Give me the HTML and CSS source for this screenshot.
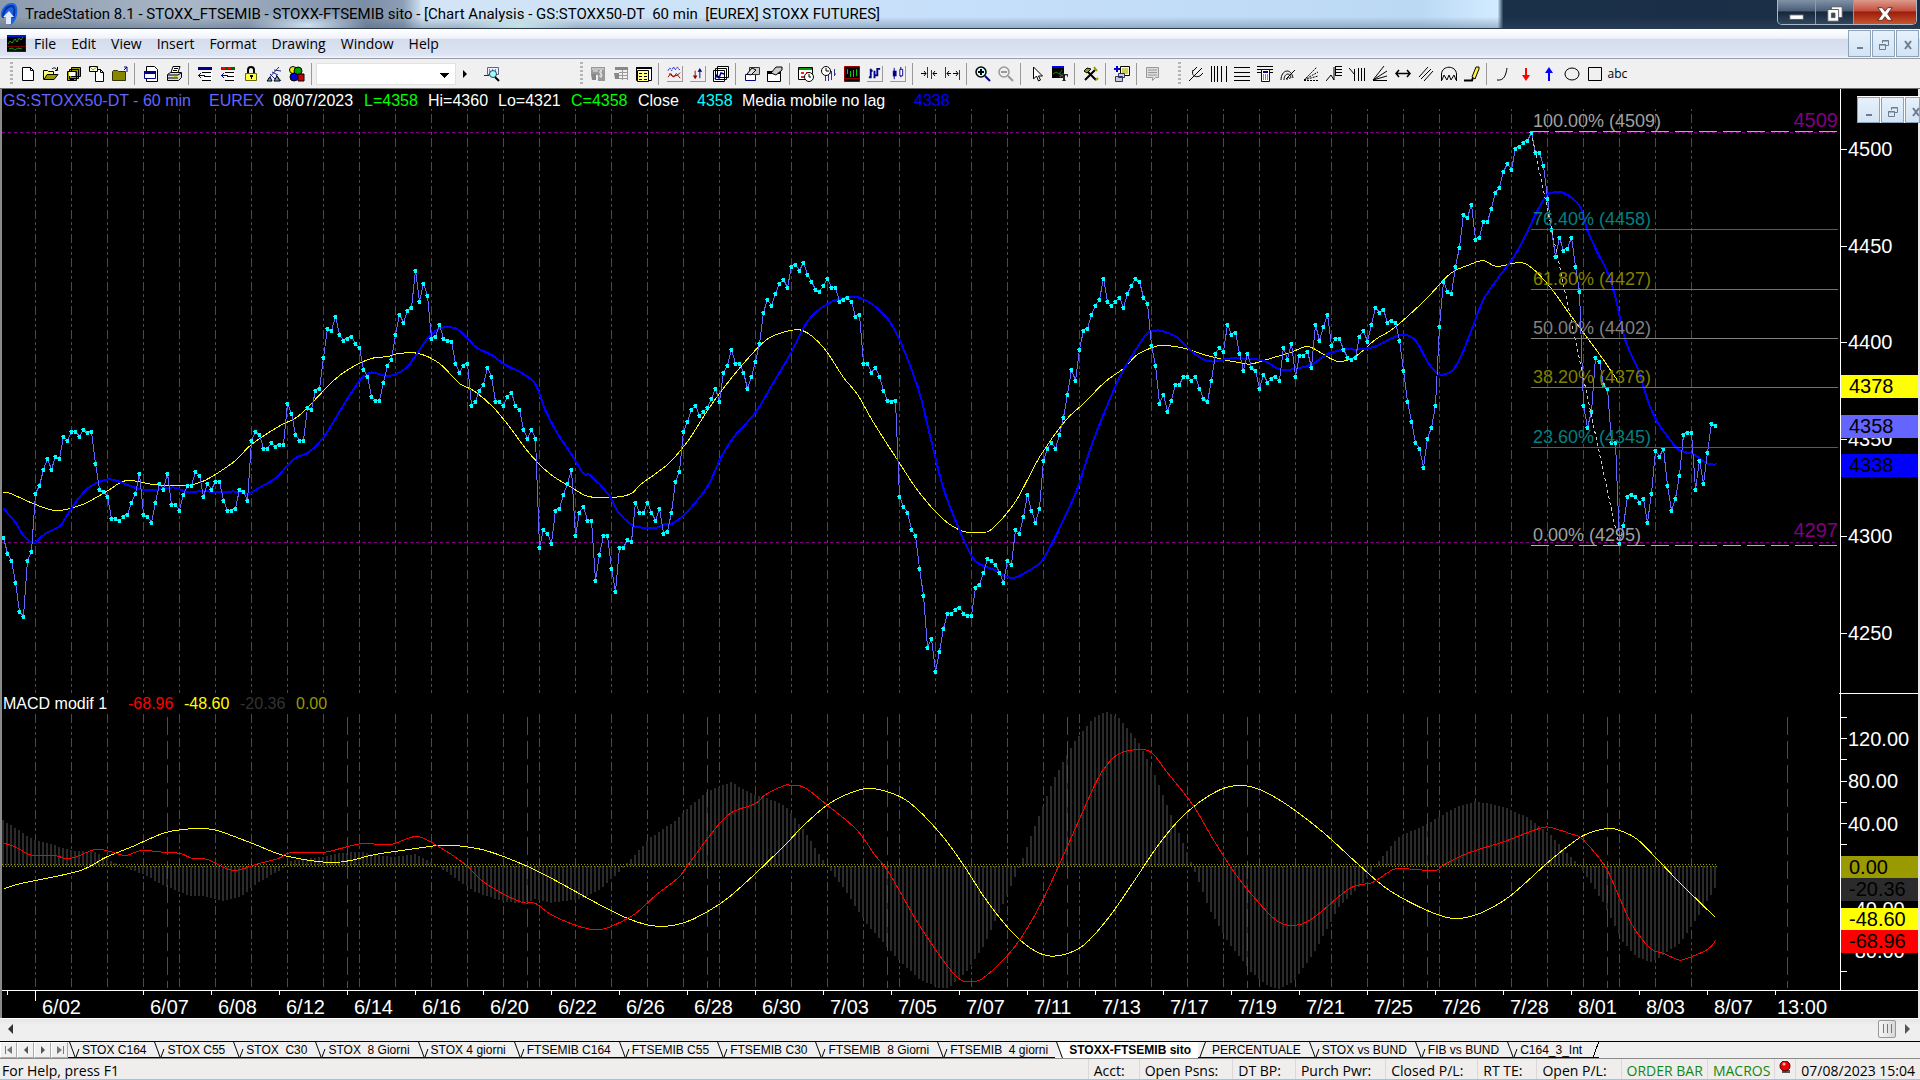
FILE: index.html
```html
<!DOCTYPE html>
<html lang="en">
<head>
    <meta charset="UTF-8">
    <title>TradeStation 8.1 - STOXX_FTSEMIB</title>
    <link rel="stylesheet" href="styles.css">
</head>
<body>
    <!-- Title bar -->
    <header class="title-bar">
        <svg class="app-logo" viewBox="0 0 18 24"><path d="M1 15C0 7 6 1 12 1c5 0 6 5 5 12-1 5-4 9-7 10l-1-8z" fill="#1c62e0"/><path d="M3 16C3 9 7 4 12 4c3 1 3 6 1 12" fill="none" stroke="#0a2f9c" stroke-width="2"/><path d="M6 22V15H3l6-6 5 6h-3v7z" fill="#dfe9f8"/></svg>
        <h1>TradeStation 8.1 - STOXX_FTSEMIB - STOXX-FTSEMIB sito - [Chart Analysis - GS:STOXX50-DT  60 min  [EUREX] STOXX FUTURES]</h1>
        <div class="window-buttons">
            <button aria-label="Minimize"><svg viewBox="0 0 20 20"><rect x="2" y="11" width="15" height="5" fill="#fff" stroke="#555"/></svg></button>
            <button aria-label="Restore"><svg viewBox="0 0 20 20"><path d="M6 2h12v12H6z" fill="#fff" stroke="#555"/><path d="M2 5h12v13H2z" fill="#fff" stroke="#555"/><path d="M6 9h4v5H6z" fill="#334a66" stroke="#555"/></svg></button>
            <button class="close" aria-label="Close"><svg viewBox="0 0 20 20"><path d="M2 3h5l3 4 3-4h5l-5 7 5 7h-5l-3-4-3 4H2l5-7z" fill="#fff" stroke="#5a2a2a"/></svg></button>
        </div>
    </header>

    <!-- Menu -->
    <nav class="menu-bar">
        <svg class="menu-logo" viewBox="0 0 19 17"><path fill="#000" d="M0 0h19v17H0z"/><path fill="#0018d8" d="M0 0h19v2H0z"/><path fill="#700" d="M0 11h19v1H0zM0 16h19v1H0zM18 2h1v14h-1z"/><path d="M1 9l2-3 2 2 3-4 2 3 2-4 2 2 2-3M2 14l3-1 3 2 3-2 4 1" fill="none" stroke="#0a0"/></svg>
        <a href="#">File</a>
        <a href="#">Edit</a>
        <a href="#">View</a>
        <a href="#">Insert</a>
        <a href="#">Format</a>
        <a href="#">Drawing</a>
        <a href="#">Window</a>
        <a href="#">Help</a>
        <div class="child-buttons">
            <button aria-label="Minimize chart"><svg viewBox="0 0 12 12"><path d="M3 8h6v2H3z" fill="#6d7d90"/></svg></button>
            <button aria-label="Restore chart"><svg viewBox="0 0 12 12"><path d="M4.500 4V1.500h6v5H8M4 2h7M1.500 5.500h6v5h-6zM1 6h7" fill="none" stroke="#6d7d90"/></svg></button>
            <button aria-label="Close chart"><svg viewBox="0 0 12 12"><path d="M3 2l6 8M9 2L3 10" fill="none" stroke="#6d7d90" stroke-width="2"/></svg></button>
        </div>
    </nav>

    <!-- Toolbars -->
    <div class="toolbars">
        <div class="toolbar toolbar-file">
            <span class="grip"></span>
            <button aria-label="New"><svg viewBox="0 0 16 16"><path d="M2.500 1.500h8l3 3v10h-11z" fill="#fff" stroke="#000"/><path d="M10.500 1.500v3h3" fill="none" stroke="#000"/></svg></button>
            <button aria-label="Open"><svg viewBox="0 0 16 16"><path d="M.500 13.500v-9h4l1 1h5v3" fill="#ff6" stroke="#000"/><path d="M1 13.500l3-5h11l-4 5z" fill="#990" stroke="#000"/><path d="M9 3c2-2 4-1 5 1M14.500 1v3.500H12" fill="none" stroke="#000"/></svg></button>
            <button aria-label="Save all"><svg viewBox="0 0 16 16"><path d="M5.500 1.500h9v9h-9zM3.500 3.500h9v9h-9zM1.500 5.500h9v9h-9z" fill="#990" stroke="#000"/><path d="M3 6h6v4H3z" fill="#fff"/><path d="M4 12h4v3H4z"/></svg></button>
            <button aria-label="New mail"><svg viewBox="0 0 16 16"><path d="M6.500 3.500h5l3 3v9h-8zM11.500 3.500v3h3" fill="#fff" stroke="#000"/><path d="M.500.500h8v5h-8z" fill="#ffd" stroke="#000"/><path d="M1 1l3 3 4-3" fill="none" stroke="#990"/></svg></button>
            <button aria-label="Close folder"><svg viewBox="0 0 16 16"><path d="M.500 14.500v-9l1-1h4l1 1h7v9z" fill="#880" stroke="#330"/><path d="M15 6V1h-3M15 1l-3 3" fill="none" stroke="#008"/></svg></button>
            <span class="sep"></span>
            <button aria-label="Print preview"><svg viewBox="0 0 16 16"><path d="M3.500.500h8l3 3v12h-11z" fill="#fff" stroke="#000"/><path d="M1.500 5.500h11v7h-11z" fill="#fff" stroke="#008"/><path d="M1 5h12v3H1z" fill="#008"/></svg></button>
            <button aria-label="Print"><svg viewBox="0 0 16 16"><path d="M5 6.500l2-6h7l-2 6" fill="#fff" stroke="#000"/><path d="M1.500 8.500l3-2h11v5l-3 3h-11z" fill="#ddd" stroke="#000"/><path d="M2 9h10M2 12h10M8 2.500h4M7 4.500h4M12 9l3-2" stroke="#000"/><path fill="#cc0" d="M8 10h3v1H8z"/></svg></button>
            <span class="sep"></span>
            <button aria-label="Import"><svg viewBox="0 0 16 16"><path d="M1 1h14v3H1z" fill="#008"/><path d="M6 5.500h9v9H6z" fill="#fff"/><path d="M5 6.500h9M7 10.500h7M5 14.500h9" stroke="#000"/><path d="M1 9.500h7M4 7L1.500 9.500 4 12" fill="none" stroke="#008"/></svg></button>
            <button aria-label="Import symbols"><svg viewBox="0 0 16 16"><path d="M1 1h14v3H1z" fill="#060"/><path d="M2 1h3v2H2zM8 1h3v2H8z" fill="#f00"/><path d="M6 5.500h9v9H6z" fill="#fff"/><path d="M5 6.500h9M7 10.500h7M5 14.500h9" stroke="#000"/><path d="M1 9.500h7M4 7L1.500 9.500 4 12" fill="none" stroke="#008"/></svg></button>
            <button aria-label="Lock"><svg viewBox="0 0 16 16"><path d="M5 7V4c0-4 6-4 6 0v3" fill="none" stroke="#000" stroke-width="2"/><path d="M2.500 7.500h11v7h-11z" fill="#ff4" stroke="#660"/><path d="M7 9h3v2H9v2H8v-2H7z"/></svg></button>
            <button aria-label="Satellite"><svg viewBox="0 0 16 16"><path d="M2 13L13 1M4 8l5 5M6 6l6 3M8 4l7 1M10 9l5 6" stroke="#228" fill="none"/><path d="M1 15h5l-2-4zM8 15h6l-3-5z" fill="#6ab" stroke="#000"/></svg></button>
            <button aria-label="Styles"><svg viewBox="0 0 16 16"><circle cx="4" cy="4" r="3.500" fill="#ee0" stroke="#000"/><circle cx="9" cy="5" r="4" fill="#090" stroke="#000"/><circle cx="5" cy="11" r="4" fill="#00c" stroke="#000"/><path d="M9 8h6v7H9z" fill="#c00" stroke="#000"/></svg></button>
            <span class="sep"></span>
            <select class="symbol-box" aria-label="Symbol"><option></option></select>
            <button class="narrow" aria-label="Go"><svg viewBox="0 0 8 16"><path d="M2 4l4 4-4 4z"/></svg></button>
            <button class="lookup" aria-label="Symbol lookup"><svg viewBox="0 0 16 16"><path d="M3.500 1.500h11v7h-11z" fill="#eef" stroke="#667"/><path d="M0 9.500h5M5 4h1M8 4h1M11 4h1M5 6h7" stroke="#226"/><circle cx="9" cy="8" r="3.500" fill="#9ff" stroke="#246"/><path d="M11 11l4 4" stroke="#000" stroke-width="2"/></svg></button>
        </div>
        <div class="toolbar toolbar-chart">
            <span class="grip"></span>
            <button aria-label="Quote" disabled><svg viewBox="0 0 16 16"><path d="M1 1h14v14H8V9H1z" fill="#999"/><path d="M2 3h12M3 5h5M12 5c-3-1-3 2-1 3s1 3-2 2M11 4v8" stroke="#eee" fill="none"/><path d="M1 8h5v6H2z" fill="#888"/></svg></button>
            <button aria-label="Quote list" disabled><svg viewBox="0 0 16 16"><path d="M2 1h13v3H2zM1 7h5v6H2z" fill="#888"/><path d="M6 6.500h9M6 9.500h9M6 12.500h9M9.500 4v10M14.500 4v10" stroke="#999"/></svg></button>
            <button aria-label="Data window"><svg viewBox="0 0 16 16"><path d="M.500 1.500h15v13H.500z" fill="#fff" stroke="#000"/><path d="M0 1h16v2H0z"/><path d="M1.500 4.500h11v11h-11z" fill="#ff8" stroke="#000"/><path d="M3 7.500h3M8 7.500h3M3 10.500h3M8 10.500h3M3 13.500h3M8 13.500h3" stroke="#000"/></svg></button>
            <span class="sep"></span>
            <button class="raised" aria-label="Indicators"><svg viewBox="0 0 16 16"><path d="M1 5l2-3 2 3 2-4 2 3 2-3 3 4" fill="none" stroke="#00c" stroke-dasharray="2 1"/><path d="M1 12l3-4 3 4 3-4 4 5M2 8l4 3 5-1 3-3" fill="none" stroke="#900"/></svg></button>
            <button class="raised" aria-label="Signals"><svg viewBox="0 0 16 16"><path d="M5.500 5v7" stroke="#900"/><path d="M3 10h5l-2.500 4z" fill="#900"/><path d="M10.500 5v8" stroke="#008"/><path d="M8 6h5l-2.500-4z" fill="#008"/></svg></button>
            <button aria-label="Strategies"><svg viewBox="0 0 16 16"><path d="M4.500.500h11v11h-11zM2.500 2.500h11v11h-11zM.500 4.500h11v11H.500z" fill="#fff" stroke="#000"/><path d="M2 13l2-4 2 3 2-5 3 1" fill="none" stroke="#008" stroke-width="1.500"/></svg></button>
            <span class="sep"></span>
            <button aria-label="Format analysis"><svg viewBox="0 0 16 16"><path d="M1.500 8.500h10v6h-10z" fill="#fff" stroke="#008"/><path d="M5.500 1.500h10v7h-10z" fill="#ccc" stroke="#333"/><path d="M3 8l5-6 4 2-5 5z" fill="#ddd" stroke="#000"/></svg></button>
            <button aria-label="Format window"><svg viewBox="0 0 16 16"><path d="M.500 5.500h13v10H.500z" fill="#fff" stroke="#000"/><path d="M0 5h14v3H0z"/><path d="M4 7l5-6h6v3l-6 5z" fill="#ccc" stroke="#000"/></svg></button>
            <span class="sep"></span>
            <button aria-label="Sessions"><svg viewBox="0 0 16 16"><path d="M.500 1.500h14v12H.500z" fill="#fff" stroke="#000"/><path d="M1 2h13v2H1z" fill="#090"/><path d="M3 6h3v2H3zM8 6h3v2H8zM3 10h3v2H3z" fill="#e22"/><circle cx="11" cy="11" r="4.500" fill="#fff" stroke="#000"/><path d="M11 8v3h2" fill="none" stroke="#000"/></svg></button>
            <button aria-label="Interval"><svg viewBox="0 0 16 16"><circle cx="5" cy="5" r="4.500" fill="#fff" stroke="#000"/><path d="M5 2v3h3" fill="none" stroke="#000"/><path d="M4.500 10v5M7.500 9v6M10.500 5v9M13.500 3v7M9 7h2M13 8h2" stroke="#338"/></svg></button>
            <button aria-label="Bar chart"><svg viewBox="0 0 16 16"><path d="M.500.500h15v15H.500z" fill="#000" stroke="#900"/><path d="M0 12.500h16" stroke="#900"/><path d="M3.500 3v5M6.500 5v6M9.500 4v7M12.500 3v7" stroke="#0c0"/></svg></button>
            <button class="raised" aria-label="OHLC bars"><svg viewBox="0 0 16 16"><path d="M4 3v10M2 12h2M4 5h2M8 5v8M11 2v9M9 10h2M11 3h3" stroke="#008" stroke-width="2"/></svg></button>
            <button class="raised" aria-label="Candles"><svg viewBox="0 0 16 16"><path d="M4.500 2v12M11.500 1v11" stroke="#008"/><path d="M3 5h4v6H3z" fill="#008"/><path d="M10.500 3.500h3v7h-3z" fill="#fff" stroke="#008"/></svg></button>
            <span class="sep"></span>
            <button aria-label="Decrease spacing"><svg viewBox="0 0 16 16"><path d="M6.500 1v11M10.500 4v9" stroke="#22c"/><path d="M0 7.500h5M17 7.500h-5M3 5l2 2.500L3 10M14 5l-2 2.500 2 2.500" stroke="#000" fill="none"/></svg></button>
            <button aria-label="Increase spacing"><svg viewBox="0 0 16 16"><path d="M1.500 1v11M15.500 4v10" stroke="#22c"/><path d="M3 7.500h4M9 7.500h5M5 5L3 7.500 5 10M12 5l2 2.500-2 2.500" stroke="#000" fill="none"/></svg></button>
            <span class="sep"></span>
            <button aria-label="Zoom in"><svg viewBox="0 0 16 16"><circle cx="6" cy="6" r="5" fill="#cff" stroke="#000" stroke-width="1.500"/><path d="M3 6h6M6 3v6" stroke="#000" stroke-width="2"/><path d="M10 10l5 5" stroke="#008" stroke-width="2"/></svg></button>
            <button aria-label="Zoom out" disabled><svg viewBox="0 0 16 16"><circle cx="6" cy="6" r="5" fill="#eee" stroke="#999" stroke-width="1.500"/><path d="M3 6h6" stroke="#999" stroke-width="2"/><path d="M10 10l5 5" stroke="#999" stroke-width="2"/></svg></button>
            <span class="sep"></span>
            <button aria-label="Pointer"><svg viewBox="0 0 16 16"><path d="M4.500 1v12l3-3 2 5 2-1-2-4h4z" fill="#fff" stroke="#000"/></svg></button>
            <button aria-label="Chart text"><svg viewBox="0 0 16 16"><path d="M0 0h12v12H0z"/><path d="M0 0h12v2H0z" fill="#00f"/><path d="M1 8l3-2 3 2 3-4" stroke="#090" fill="none"/><path d="M8 8h8v3h-1V9.500h-2V14h1v1h-4v-1h1V9.500H9V11H8z" stroke="#fff" stroke-width=".3"/></svg></button>
            <span class="sep"></span>
            <button aria-label="Tools"><svg viewBox="0 0 16 16"><path d="M2 14L12 4M3 4l10 10" stroke="#000" stroke-width="2"/><path d="M1 5l3-3 4 1-4 4z" fill="#990" stroke="#000"/><path d="M11 1l3 4M13 14l2-2" stroke="#990" stroke-width="2"/></svg></button>
            <span class="sep"></span>
            <button aria-label="Insert report"><svg viewBox="0 0 16 16"><path d="M6.500.500h9v9h-9z" fill="#ffc" stroke="#000"/><path d="M8 3h6M8 5h6M8 7h6" stroke="#990"/><path d="M0 3h6M3 0v6" stroke="#00c" stroke-width="2"/><path d="M4.500 7.500h6v4h-6zM1.500 10.500h7v5h-7z" fill="#ccd" stroke="#336"/></svg></button>
            <span class="sep"></span>
            <button aria-label="Notes" disabled><svg viewBox="0 0 16 16"><path d="M1.500 1.500h12v10h-3l-3 3v-3h-6z" fill="#ddd" stroke="#999"/><path d="M3 4h9M3 6.500h9M3 9h9" stroke="#999"/></svg></button>
        </div>
        <div class="toolbar">
            <span class="grip"></span>
            <button aria-label="Pitchfork"><svg viewBox="0 0 16 16"><path d="M1 15L8 8M5 4C3 9 7 12 12 10L15 7M5 5l4-4M8 8l6-6" stroke="#000" fill="none"/></svg></button>
            <button aria-label="Vertical lines"><svg viewBox="0 0 16 16"><path d="M.500 0v16M3.500 0v16M6.500 0v16M10.500 0v16M15.500 0v16" stroke="#000"/></svg></button>
            <button aria-label="Horizontal lines"><svg viewBox="0 0 16 16"><path d="M0 1.500h16M0 6.500h16M0 10.500h16M0 14.500h16" stroke="#000"/></svg></button>
            <button aria-label="Fibonacci calculator"><svg viewBox="0 0 16 16"><path d="M0 .500h16M0 3.500h16M0 6.500h16" stroke="#000"/><path d="M4.500 3.500h8v12h-8z" fill="#fff" stroke="#008"/><path d="M6 5h5v2H6z" fill="#008"/><path d="M6 9h6M6 11h6M6 13h6" stroke="#008" stroke-dasharray="1 1"/></svg></button>
            <button aria-label="Arcs"><svg viewBox="0 0 16 16"><path d="M1 14C1 4 11 1 13 12M4 14c0-7 6-8 7-2M7 14c0-3 2-4 3-1M6 13l9-9" stroke="#000" fill="none"/></svg></button>
            <button aria-label="Speed fan"><svg viewBox="0 0 16 16"><path d="M1 14.500h14M1 14L14 1M1 14l14-8M1 14l14-4" stroke="#000" stroke-dasharray="2 1" fill="none"/></svg></button>
            <button aria-label="Price extension"><svg viewBox="0 0 16 16"><path d="M0 15l5-6 3 5V1M10 .500h6M10 3.500h6M10 6.500h6M10 9.500h6M9.500 0v10" stroke="#000" fill="none"/></svg></button>
            <button aria-label="Time extension"><svg viewBox="0 0 16 16"><path d="M0 2l6 7M5.500 3v12M9.500 2v13M12.500 2v13M15.500 2v13" stroke="#000"/></svg></button>
            <button aria-label="Gann fan"><svg viewBox="0 0 16 16"><path d="M1 14.500h14M1 14L12 0M1 14L15 5M1 14l14-4" stroke="#000" fill="none"/></svg></button>
            <button aria-label="Horizontal arrow"><svg viewBox="0 0 16 16"><path d="M2 7.500h12M4 4L1 7.500 4 11M12 4l3 3.500-3 3.500" stroke="#000" fill="none" stroke-width="1.500"/></svg></button>
            <button aria-label="Channel"><svg viewBox="0 0 16 16"><path d="M1 11L10 1M3 13L13 3M6 15l9-10" stroke="#000"/></svg></button>
            <button aria-label="Cycles"><svg viewBox="0 0 16 16"><path d="M.500 15V8C1-1 15-1 15.500 8v7M1 14l2-5 3 5 2-5 2 5 3-5 2 5" stroke="#000" fill="none"/></svg></button>
            <button aria-label="Pencil"><svg viewBox="0 0 16 16"><path d="M0 14.500h8l1-3" stroke="#000" stroke-width="2" fill="none"/><path d="M8 11l4-10h3v2l-4 10z" fill="#fe4" stroke="#000"/></svg></button>
            <span class="sep"></span>
            <button aria-label="Curve"><svg viewBox="0 0 16 16"><path d="M2 14c7 1 9-5 10-12" stroke="#000" fill="none"/></svg></button>
            <button aria-label="Down arrow"><svg viewBox="0 0 16 16"><path d="M7 2h2v7h3l-4 6-4-6h3z" fill="#f00"/></svg></button>
            <button aria-label="Up arrow"><svg viewBox="0 0 16 16"><path d="M7 15h2V7h3L8 1 4 7h3z" fill="#00f"/></svg></button>
            <button aria-label="Ellipse"><svg viewBox="0 0 16 16"><ellipse cx="8" cy="8" rx="7" ry="6" stroke="#000" fill="none"/></svg></button>
            <button aria-label="Rectangle"><svg viewBox="0 0 16 16"><path d="M1.500 1.500h13v13h-13z" stroke="#000" fill="none"/></svg></button>
            <button class="text-tool">abc</button>
        </div>
    </div>

    <!-- Chart -->
    <main class="chart">
        <svg id="chart" viewBox="0 89 1920 929" role="img" aria-label="STOXX50 60 minute chart"></svg>
        <div class="child-buttons floating">
            <button aria-label="Minimize window"><svg viewBox="0 0 12 12"><path d="M3 8h6v2H3z" fill="#6d7d90"/></svg></button>
            <button aria-label="Restore window"><svg viewBox="0 0 12 12"><path d="M4.500 4V1.500h6v5H8M4 2h7M1.500 5.500h6v5h-6zM1 6h7" fill="none" stroke="#6d7d90"/></svg></button>
            <button aria-label="Close window"><svg viewBox="0 0 12 12"><path d="M3 2l6 8M9 2L3 10" fill="none" stroke="#6d7d90" stroke-width="2"/></svg></button>
        </div>
    </main>

    <div class="scroll-bar">
        <button aria-label="Scroll left"><svg viewBox="0 0 8 12"><path d="M6 1v10L1 6z" fill="#333"/></svg></button>
        <button class="thumb" aria-label="Scroll position"></button>
        <button aria-label="Scroll right"><svg viewBox="0 0 8 12"><path d="M2 1v10l5-5z" fill="#555"/></svg></button>
    </div>

    <!-- Workspace tabs -->
    <nav class="tabs">
        <button class="tab-nav" aria-label="First"><svg viewBox="0 0 10 10"><path d="M1 1h1v8H1zM8 1v8L3 5z" fill="#777"/></svg></button>
        <button class="tab-nav" aria-label="Previous"><svg viewBox="0 0 10 10"><path d="M7 1v8L3 5z" fill="#555"/></svg></button>
        <button class="tab-nav" aria-label="Next"><svg viewBox="0 0 10 10"><path d="M3 1v8l4-4z" fill="#555"/></svg></button>
        <button class="tab-nav" aria-label="Last"><svg viewBox="0 0 10 10"><path d="M8 1h1v8H8zM2 1v8l5-4z" fill="#777"/></svg></button>
        <a href="#" class="tab">STOX C164</a>
        <a href="#" class="tab">STOX C55</a>
        <a href="#" class="tab">STOX  C30</a>
        <a href="#" class="tab">STOX  8 Giorni</a>
        <a href="#" class="tab">STOX 4 giorni</a>
        <a href="#" class="tab">FTSEMIB C164</a>
        <a href="#" class="tab">FTSEMIB C55</a>
        <a href="#" class="tab">FTSEMIB C30</a>
        <a href="#" class="tab">FTSEMIB  8 Giorni</a>
        <a href="#" class="tab">FTSEMIB  4 giorni</a>
        <a href="#" class="tab active">STOXX-FTSEMIB sito</a>
        <a href="#" class="tab">PERCENTUALE</a>
        <a href="#" class="tab">STOX vs BUND</a>
        <a href="#" class="tab">FIB vs BUND</a>
        <a href="#" class="tab last">C164_3_Int</a>
    </nav>

    <footer class="status-bar">
        <span class="help">For Help, press F1</span>
        <span>Acct:</span>
        <span>Open Psns:</span>
        <span>DT BP:</span>
        <span>Purch Pwr:</span>
        <span>Closed P/L:</span>
        <span>RT TE:</span>
        <span>Open P/L:</span>
        <span class="on">ORDER BAR</span>
        <span class="on">MACROS</span>
        <span class="led"><svg viewBox="0 0 12 14"><path d="M3 9h8v3H3z" fill="#555"/><circle cx="6" cy="5" r="5" fill="#e00" stroke="#400"/><circle cx="5" cy="3" r="1.500" fill="#fbb"/></svg></span>
        <span class="clock">07/08/2023 15:04</span>
    </footer>

    <script src="chart.js"></script>
</body>
</html>
```

FILE: styles.css
```css
:root {
    --ui-font: "Open Sans", "Noto Sans", sans-serif;
    --chart-font: "Liberation Sans", Arial, sans-serif;
    --face: #f0f0f0;
}

* {
    margin: 0;
    padding: 0;
    box-sizing: border-box;
}

body {
    display: flex;
    flex-direction: column;
    min-height: 100vh;
    background-color: #9fc3d8;
    font-family: var(--ui-font);
    color: #000;
}

button {
    border: none;
    background: none;
    font: inherit;
}

a {
    color: inherit;
    text-decoration: none;
}

/* Title bar */
.title-bar {
    display: flex;
    height: 29px;
    border-bottom: 1px solid #2c3c4e;
    background:
        radial-gradient(ellipse 60px 14px at 16% 90%, #cfe0f0, transparent),
        radial-gradient(ellipse 60px 14px at 27% 90%, #c5e2e8, transparent),
        linear-gradient(rgba(255, 255, 255, 0) 60%, rgba(60, 80, 105, 0.35)),
        linear-gradient(90deg, #8c9bad 0, #a9b7c8 10%, #7c8ea6 19%, #8d9fb6 21%, #d3e5f5 22%, #c6dffa 50%, #bcd9f4 74%, #d2ebff 78%, #1a3049 78.3%, #1b2e45 100%);
}

.app-logo {
    width: 18px;
    height: 24px;
    margin: 2px 7px 0 0;
}

.title-bar h1 {
    flex: 1;
    font-family: Roboto, var(--ui-font);
    font-size: 15px;
    font-weight: normal;
    line-height: 29px;
    white-space: pre;
}

.window-buttons {
    display: flex;
    height: 25px;
    margin-right: 3px;
    border: 1px solid #aab8c8;
    border-top: none;
    border-radius: 0 0 5px 5px;
    overflow: hidden;
}

.window-buttons button {
    width: 38px;
    border-right: 1px solid #8b9bae;
    background: linear-gradient(#8092a6, #4a5f78 45%, #16273b 50%, #31475f);
}

.window-buttons .close {
    width: 62px;
    border-right: none;
    background: linear-gradient(#dc9a8c, #c5503c 45%, #9c1c0c 50%, #c8562c);
}

.window-buttons svg {
    width: 20px;
    height: 18px;
    vertical-align: middle;
}

/* Menu */
.menu-bar {
    display: flex;
    align-items: center;
    gap: 15px;
    height: 30px;
    padding-left: 7px;
    border-bottom: 1px solid #9a9da6;
    background: linear-gradient(#fff 0, #f0f3fa 32%, #d5dcec 34%, #dde4f4 90%, #f4f6fb);
    font-size: 14px;
}

.menu-logo {
    width: 19px;
    height: 17px;
    margin-right: -7px;
}

.child-buttons {
    display: flex;
    gap: 1px;
    height: 27px;
    margin: 0 1px 0 auto;
    background-color: #fff;
}

.child-buttons button {
    width: 23px;
    border: 1px solid #8fa3b8;
    background: linear-gradient(#e6f1fb, #d3e4f5);
}

.child-buttons svg {
    width: 12px;
    height: 12px;
    vertical-align: middle;
}

/* Toolbars */
.toolbars {
    display: flex;
    height: 30px;
    border-bottom: 1px solid #6e6e6e;
    background-color: var(--face);
}

.toolbar {
    display: flex;
    align-items: center;
    padding-left: 10px;
}

.toolbar-file {
    padding-right: 60px;
}

.toolbar-chart {
    padding-right: 4px;
}

.grip {
    width: 3px;
    height: 24px;
    margin-right: 3px;
    background: repeating-linear-gradient(#b4b4b4 0 2px, transparent 2px 4px);
}

.toolbar button {
    display: flex;
    align-items: center;
    justify-content: center;
    width: 23px;
    height: 22px;
}

.toolbar button svg {
    width: 16px;
    height: 16px;
}

.toolbar .raised svg {
    border-right: 1px solid #999;
    border-bottom: 1px solid #999;
}

.toolbar .narrow {
    width: 18px;
}

.toolbar .narrow svg {
    width: 8px;
}

.toolbar .lookup {
    width: 36px;
}

.toolbar .text-tool {
    font-size: 12px;
}

.sep {
    width: 1px;
    height: 22px;
    margin: 0 4px 0 3px;
    background-color: #999;
}

.symbol-box {
    width: 140px;
    height: 22px;
    border: 1px solid #e2e2e2;
    appearance: none;
    background: linear-gradient(#000, #000) no-repeat 123px 9px / 9px 1px,
        linear-gradient(#000, #000) no-repeat 124px 10px / 7px 1px,
        linear-gradient(#000, #000) no-repeat 125px 11px / 5px 1px,
        linear-gradient(#000, #000) no-repeat 126px 12px / 3px 1px,
        linear-gradient(#000, #000) no-repeat 127px 13px / 1px 1px,
        #fff;
}

/* Chart */
.chart {
    position: relative;
    background-color: #000;
}

#chart {
    display: block;
    width: 100%;
    height: auto;
    font-family: var(--chart-font);
}

.floating {
    position: absolute;
    top: 7px;
    right: 0;
    margin: 0;
    border-top: 1px solid #fff;
}

.floating button:last-child {
    width: 15px;
    overflow: hidden;
}

.floating button:last-child svg {
    margin-left: 4px;
}

.crisp {
    shape-rendering: crispEdges;
    fill: none;
}

.day-line {
    stroke: #4a4a4a;
    stroke-dasharray: 9 3 3 3 3 3;
}

.cycle-line {
    stroke: #006c6c;
    stroke-dasharray: 18 6;
}

.axis-line {
    stroke: #fff;
}

.level {
    stroke: #800080;
    stroke-dasharray: 3 3;
}

.fib-edge {
    stroke: #b0b0b0;
    stroke-dasharray: 18 6;
}

.fib-trend {
    stroke: #ccc;
    stroke-dasharray: 3 3;
}

.price {
    stroke: #6464ff;
}

.marker {
    fill: #00ffff;
}

.average {
    stroke: #0000ff;
    stroke-width: 2;
}

.cycle {
    stroke: #ffff00;
}

.macd {
    stroke: #ff0000;
}

.zero {
    stroke: #999900;
    stroke-dasharray: 1 2;
}

.histogram {
    stroke: #2b2b2b;
    stroke-width: 2;
}

.axis-text {
    font-size: 20px;
}

.fib-text {
    font-size: 18px;
}

.legend-text {
    font-size: 16px;
}

/* Scroll bar */
.scroll-bar {
    display: flex;
    align-items: center;
    height: 23px;
    padding: 0 2px 3px 0;
    border-top: 1px solid #fff;
    background: linear-gradient(#e6e6e6, #efefef 30%);
}

.scroll-bar button {
    display: flex;
    align-items: center;
    justify-content: center;
    width: 22px;
    height: 18px;
}

.scroll-bar svg {
    width: 8px;
    height: 12px;
}

.scroll-bar .thumb {
    width: 18px;
    margin-left: auto;
    border: 1px solid #979797;
    border-radius: 2px;
    background: repeating-linear-gradient(90deg, #777 0 1px, transparent 1px 4px) no-repeat center / 9px 9px,
        linear-gradient(90deg, #f5f5f5, #d8d8d8);
}

/* Tabs */
.tabs {
    display: flex;
    height: 18px;
    border-top: 1px solid #000;
    border-bottom: 1px solid #8c8c8c;
    background-color: var(--face);
    font-family: var(--chart-font);
    font-size: 12px;
    line-height: 16px;
}

.tab-nav {
    width: 17px;
    border: 1px solid #aaa;
    border-top-color: #fff;
    border-left-color: #fff;
}

.tab-nav svg {
    display: block;
    width: 10px;
    height: 10px;
    margin: auto;
}

.tab {
    position: relative;
    padding: 0 7px 0 14px;
    border-bottom: 1px solid #000;
    white-space: pre;
}

/* slanted edge shared by two neighbouring tabs */
.tab::before {
    content: "";
    position: absolute;
    top: 0;
    left: 4px;
    width: 1px;
    height: 16px;
    background-color: #000;
    transform: skewX(20deg);
}

.tab::after {
    content: "";
    position: absolute;
    left: 9px;
    bottom: 0;
    width: 1px;
    height: 8px;
    background-color: #000;
    transform: skewX(-20deg);
}

.tab.active {
    background: linear-gradient(70deg, var(--face) 7px, #fff 8px);
    font-weight: bold;
    border-bottom-color: #fff;
}

.tab.active::after {
    display: none;
}

.tab.active + .tab::before {
    transform: skewX(-20deg);
}

.tab.active + .tab::after {
    display: none;
}

.tab.last {
    padding-right: 17px;
    background: linear-gradient(110deg, transparent calc(100% - 6px), #000 calc(100% - 6px), #000 calc(100% - 5px), transparent calc(100% - 5px));
}

/* Status bar */
.status-bar {
    display: flex;
    height: 20px;
    background-color: #f0eded;
    font-size: 14px;
    line-height: 23px;
    overflow: hidden;
    white-space: nowrap;
}

.status-bar span {
    padding: 0 14px 0 5px;
    border-left: 1px solid #dcd8d8;
}

.status-bar .help {
    flex: 1;
    padding-left: 2px;
    border-left: none;
}

.status-bar .on {
    padding-right: 4px;
    color: #118811;
}

.status-bar .led {
    padding: 2px 4px 0;
}

.led svg {
    display: block;
    width: 12px;
    height: 14px;
}

.status-bar .clock {
    padding-right: 5px;
}
```

FILE: chart.js
```js
const svg = document.getElementById('chart');
const NS = 'http://www.w3.org/2000/svg';
const LAST = 1838;

// close of every 60 min bar, as the height at which it is plotted
const closes = [
    537,553,560,582,611,616,560,551,493,485,469,458,469,456,458,436,440,431,431,436,
    429,432,431,463,489,491,496,518,518,520,516,514,502,493,473,514,516,522,502,483,
    489,473,504,504,510,494,485,485,471,475,496,483,489,481,481,500,510,510,508,489,
    491,500,440,431,434,448,448,442,446,444,444,403,413,434,440,440,407,409,390,388,
    357,328,330,316,334,340,338,336,343,347,369,376,396,400,400,382,365,359,334,314,
    322,310,307,270,301,283,295,338,336,324,338,340,341,363,372,365,363,405,401,390,
    384,367,376,401,401,405,396,392,405,409,429,438,429,438,547,529,533,543,510,508,
    494,483,469,535,512,506,520,520,580,554,535,535,568,591,547,547,539,541,502,512,
    512,502,512,520,508,533,531,512,481,471,431,421,409,405,415,411,407,398,388,401,
    372,365,349,363,363,372,388,376,361,343,312,299,305,293,283,279,287,266,264,270,
    262,274,281,289,291,285,278,287,287,301,299,297,301,316,314,363,363,372,367,376,
    390,400,401,400,496,506,512,529,535,568,595,647,638,671,651,628,613,613,609,607,
    613,615,615,587,584,572,558,560,564,572,582,560,564,529,533,516,494,510,522,508,
    460,448,442,448,434,417,394,369,380,349,330,328,314,305,299,278,301,305,301,297,
    307,293,285,278,281,297,303,345,365,403,394,411,400,384,384,376,376,380,376,388,
    398,401,380,353,347,351,324,334,332,353,370,353,367,370,388,374,382,378,376,380,
    347,359,343,376,355,355,351,367,324,340,326,314,345,338,338,349,357,359,357,336,
    330,341,324,307,312,309,322,320,322,340,370,401,421,442,448,467,438,427,405,326,
    281,291,293,266,247,214,217,204,239,237,221,221,208,192,187,171,163,169,148,146,
    142,140,132,152,152,165,198,229,256,237,250,248,237,266,291,405,427,411,357,361,
    384,388,442,442,543,525,496,494,496,502,498,522,493,450,456,448,485,510,498,475,
    434,432,432,489,460,483,452,423,425
];

const average = [
    3,508, 15,522, 23,535, 31,542, 35,542, 45,533, 59,526, 67,514, 78,498, 90,486, 107,479, 118,481,
    137,488, 151,490, 173,487, 188,492, 203,490, 214,492, 233,491, 245,493, 249,493, 261,486, 276,477,
    286,466, 296,457, 308,452, 323,437, 341,408, 351,392, 361,378, 371,372, 384,375, 395,374, 408,365,
    427,338, 439,328, 455,328, 467,338, 476,347, 492,355, 504,364, 522,373, 535,384, 545,410, 557,433,
    571,454, 583,473, 590,475, 608,494, 618,512, 632,525, 640,527, 657,527, 663,524, 672,523, 685,513,
    707,486, 720,458, 733,437, 755,412, 773,382, 788,357, 807,321, 823,306, 840,298, 858,297, 877,308,
    895,331, 917,386, 930,437, 943,488, 960,532, 972,557, 980,564, 993,569, 1005,576, 1015,577, 1025,572,
    1040,562, 1052,542, 1065,515, 1077,488, 1090,448, 1103,414, 1120,375, 1140,342, 1148,332, 1157,330,
    1163,331, 1177,337, 1188,348, 1203,359, 1213,361, 1230,358, 1257,359, 1267,362, 1280,369, 1297,368,
    1313,363, 1328,353, 1345,349, 1358,349, 1375,346, 1387,340, 1402,334, 1415,340, 1428,363, 1437,373,
    1443,374, 1453,369, 1463,350, 1472,327, 1483,299, 1498,277, 1513,257, 1525,235, 1537,210, 1547,194,
    1553,192, 1562,192, 1572,198, 1580,207, 1587,230, 1597,252, 1607,272, 1615,297, 1625,340, 1638,370,
    1648,402, 1657,422, 1665,433, 1678,449, 1693,454, 1707,463, 1716,464
];

const cycle = [
    3,492, 10,493, 35,504, 56,510, 82,504, 106,491, 126,480, 153,484, 186,485, 202,481, 218,472, 235,460,
    251,444, 278,426, 296,417, 310,404, 333,380, 351,367, 371,358, 388,356, 398,353, 418,353, 439,363,
    459,383, 473,390, 492,406, 508,425, 529,453, 549,473, 571,487, 588,496, 612,497, 631,493, 640,484,
    667,464, 687,441, 707,410, 722,389, 743,363, 765,340, 782,332, 802,330, 823,347, 843,377, 857,394,
    873,422, 898,461, 918,491, 943,519, 963,531, 980,532, 992,528, 1015,501, 1040,455, 1065,420, 1082,404,
    1105,381, 1123,368, 1137,354, 1152,347, 1160,345, 1175,346, 1188,349, 1210,356, 1243,363, 1253,363,
    1273,357, 1290,352, 1305,346, 1313,348, 1330,358, 1340,361, 1355,356, 1375,339, 1390,330, 1407,316,
    1427,297, 1450,273, 1467,265, 1483,260, 1496,266, 1519,262, 1532,268, 1550,287, 1568,312, 1585,335,
    1602,358, 1619,383
];

const macd = [
    4,843, 14,846, 32,855, 54,855, 65,858, 74,857, 95,849, 110,851, 125,855, 141,850, 165,852, 180,853,
    192,858, 207,859, 228,869, 240,869, 255,864, 278,858, 290,852, 322,852, 340,848, 362,843, 390,844,
    416,836, 438,846, 465,864, 480,879, 500,892, 522,902, 535,903, 552,915, 582,927, 600,929, 615,924,
    635,913, 655,895, 678,877, 690,861, 715,828, 731,812, 755,803, 765,794, 784,785, 791,785, 804,787,
    826,804, 856,829, 874,854, 889,873, 919,925, 954,974, 972,981, 986,975, 1012,949, 1029,924, 1044,896,
    1062,857, 1094,785, 1106,765, 1119,753, 1140,749, 1152,753, 1166,771, 1192,804, 1214,841, 1236,875,
    1259,903, 1276,920, 1292,925, 1312,918, 1349,888, 1372,882, 1389,871, 1399,868, 1434,870, 1442,865,
    1469,852, 1504,841, 1542,827, 1557,829, 1572,834, 1580,837, 1595,853, 1607,870, 1618,895, 1632,925,
    1650,948, 1663,953, 1677,959, 1683,959, 1707,949, 1715,940
];

const signal = [
    4,888, 20,883, 35,880, 80,870, 105,857, 132,846, 162,833, 182,829, 205,828, 220,831, 252,843, 280,854,
    310,860, 332,862, 350,860, 375,854, 415,848, 438,845, 455,845, 485,850, 525,865, 555,880, 595,902,
    625,917, 650,925, 672,925, 692,919, 720,903, 742,885, 784,845, 802,826, 826,805, 846,794, 866,788,
    886,791, 909,802, 939,832, 962,863, 984,897, 1009,929, 1029,947, 1046,955, 1064,954, 1084,944,
    1109,916, 1134,880, 1159,843, 1184,814, 1214,792, 1236,785, 1259,789, 1289,806, 1324,833, 1359,865,
    1389,890, 1429,911, 1454,918, 1479,913, 1509,896, 1545,864, 1567,846, 1585,834, 1608,828, 1622,831,
    1637,839, 1658,860, 1680,883, 1715,917
];

// outline of the MACD histogram
const histogram = [
    3,820, 32,839, 46,843, 75,851, 95,852, 118,865, 145,875, 165,886, 190,896, 205,896, 225,901, 240,897,
    258,883, 282,869, 290,861, 322,857, 338,853, 362,852, 392,857, 415,854, 435,864, 452,876, 475,892,
    505,902, 525,903, 535,899, 550,903, 582,899, 602,888, 622,869, 650,838, 675,821, 690,806, 708,791,
    731,782, 752,794, 765,797, 784,805, 787,808, 804,830, 826,865, 844,888, 866,923, 896,957, 919,979,
    939,988, 949,988, 966,972, 984,945, 1004,902, 1022,861, 1034,828, 1054,779, 1074,742, 1094,717,
    1106,712, 1119,718, 1139,743, 1154,773, 1172,817, 1192,864, 1209,908, 1229,943, 1252,973, 1269,987,
    1279,989, 1294,981, 1314,953, 1339,907, 1364,882, 1379,861, 1397,838, 1429,823, 1454,808, 1476,801,
    1504,807, 1529,818, 1549,833, 1567,853, 1580,866, 1603,902, 1623,942, 1637,957, 1650,962, 1660,957,
    1680,943, 1692,926, 1703,908, 1715,888
];

const dates = [
    '6/07', '6/08', '6/12', '6/14', '6/16', '6/20', '6/22', '6/26', '6/28', '6/30', '7/03', '7/05', '7/07',
    '7/11', '7/13', '7/17', '7/19', '7/21', '7/25', '7/26', '7/28', '8/01', '8/03', '8/07', '13:00'
];

function add(tag, attrs, content) {
    const el = document.createElementNS(NS, tag);
    for (const key in attrs) {
        el.setAttribute(key, attrs[key]);
    }
    if (content) {
        el.textContent = content;
    }
    svg.appendChild(el);
    return el;
}

function path(cls, d, extra) {
    return add('path', Object.assign({ class: 'crisp ' + cls, d: d }, extra));
}

function label(cls, x, y, fill, content, anchor) {
    add('text', { class: cls, x: x, y: y, fill: fill, 'text-anchor': anchor || 'start' }, content);
}

// smooth curve through a flat list of x, y pairs
function curve(flat) {
    const p = [];
    for (let i = 0; i < flat.length; i += 2) {
        p.push([flat[i] + 0.5, flat[i + 1] + 0.5]);
    }
    let d = 'M' + p[0];
    for (let i = 0; i < p.length - 1; i++) {
        const a = p[Math.max(i - 1, 0)], b = p[i], c = p[i + 1], e = p[Math.min(i + 2, p.length - 1)];
        d += 'C' + [
            b[0] + (c[0] - a[0]) / 6, b[1] + (c[1] - a[1]) / 6,
            c[0] - (e[0] - b[0]) / 6, c[1] - (e[1] - b[1]) / 6,
            c[0], c[1]
        ];
    }
    return d;
}

function valueAt(flat, x) {
    for (let i = 2; i < flat.length; i += 2) {
        if (flat[i] >= x) {
            const t = (x - flat[i - 2]) / (flat[i] - flat[i - 2]);
            return flat[i - 1] + t * (flat[i + 1] - flat[i - 1]);
        }
    }
    return flat[flat.length - 1];
}

// Histogram and grid
let bars = '';
for (let i = 0; i < closes.length; i++) {
    const x = 3 + i * 4;
    bars += `M${x} 866V${Math.round(valueAt(histogram, x))}`;
}
for (let x = 35; x <= 1691; x += 36) {
    path('day-line', `M${x}.5 109V693`, { 'stroke-dashoffset': 19 });
    path('day-line', `M${x}.5 714V987`);
}
path('histogram', bars);
for (let x = 167; x <= 1787; x += 180) {
    path('cycle-line', `M${x}.5 717V988`);
}
path('zero', 'M2 864.5H1717');
path('zero', 'M3 866.5H1717');

// Price panel
path('level', `M2 132.500H${LAST}`);
path('level', `M2 542.500H${LAST}`);
path('cycle', curve(cycle));
path('average', curve(average));
path('price', 'M' + closes.map((y, i) => `${3.5 + i * 4} ${y + 0.5}`).join('L'));
add('path', {
    class: 'marker',
    'shape-rendering': 'crispEdges',
    d: closes.map((y, i) => `M${2 + i * 4} ${y - 1}h3v4h-3v-2h-1v-1h1z`).join('')
});

path('fib-edge', `M1531 131.500H${LAST}M1531 545.500H${LAST}`);
path('fib-trend', 'M1531 132L1619 545');
[
    [229, '76.40% (4458)', '#008080'],
    [289, '61.80% (4427)', '#808000'],
    [338, '50.00% (4402)', '#808080'],
    [387, '38.20% (4376)', '#808000'],
    [447, '23.60% (4345)', '#008080']
].forEach(([y, content, color]) => {
    path('', `M1531 ${y}.5H${LAST}`, { stroke: color });
    label('fib-text', 1533, y - 4, color, content);
});
label('fib-text', 1533, 127, '#a0a0a0', '100.00% (4509)');
label('fib-text', 1533, 541, '#a0a0a0', '0.00% (4295)');
label('axis-text', LAST, 127, '#800080', '4509', 'end');
label('axis-text', LAST, 537, '#800080', '4297', 'end');

// MACD panel
path('cycle', curve(signal));
path('macd', curve(macd));

// Axes
path('axis-line', 'M1840.500 89V990M2 990.500H1918M1839 693.500H1918');
[[149, '4500'], [246, '4450'], [342, '4400'], [439, '4350'], [536, '4300'], [633, '4250']].forEach(([y, content]) => {
    path('axis-line', `M1841 ${y}.5H1847`);
    label('axis-text', 1848, y + 7, '#fff', content);
});
for (let i = 0; i < 13; i++) {
    path('axis-line', `M1841 ${717 + Math.round(i * 21.2)}.5H1847`);
}
[[746, '120.00'], [788, '80.00'], [831, '40.00'], [916, '-40.00'], [958, '-80.00']].forEach(([y, content]) => {
    label('axis-text', 1848, y, '#fff', content);
});
path('axis-line', 'M7.500 991V995M35.500 991V1001');
label('axis-text', 42, 1014, '#fff', '6/02');
dates.forEach((date, i) => {
    const x = 143 + i * 68;
    path('axis-line', `M${x}.5 991V995`);
    // times sit closer to their tick than dates
    label('axis-text', date.includes(':') ? x + 2 : x + 7, 1014, '#fff', date);
});

// Value tags on the right axis
[
    [375, 23, '#ffff00', '4378'],
    [415, 23, '#6464ff', '4358'],
    [454, 23, '#0000ff', '4338'],
    [856, 22, '#999900', '0.00'],
    [878, 23, '#2b2b2b', '-20.36'],
    [908, 22, '#ffff00', '-48.60'],
    [930, 23, '#ff0000', '-68.96']
].forEach(([y, height, color, content]) => {
    add('rect', { x: 1841, y: y, width: 77, height: height, fill: color });
    label('axis-text', 1849, y + 18, '#000', content);
});

// Legends
[
    [3, '#6464ff', 'GS:STOXX50-DT - 60 min'], [209, '#6464ff', 'EUREX'], [273, '#fff', '08/07/2023'],
    [364, '#00ff00', 'L=4358'], [428, '#fff', 'Hi=4360'], [498, '#fff', 'Lo=4321'],
    [571, '#00ff00', 'C=4358'], [638, '#fff', 'Close'], [697, '#00ffff', '4358'],
    [742, '#fff', 'Media mobile no lag'], [914, '#0000ff', '4338']
].forEach(([x, color, content]) => label('legend-text', x, 106, color, content));
[
    [3, '#fff', 'MACD modif 1'], [128, '#ff0000', '-68.96'], [184, '#ffff00', '-48.60'],
    [240, '#333', '-20.36'], [296, '#999900', '0.00']
].forEach(([x, color, content]) => label('legend-text', x, 709, color, content));

// window frame
add('rect', { x: 0, y: 89, width: 2, height: 929, fill: '#8a8a8a' });
add('rect', { x: 1918, y: 89, width: 2, height: 929, fill: '#e8e8e8' });
```
